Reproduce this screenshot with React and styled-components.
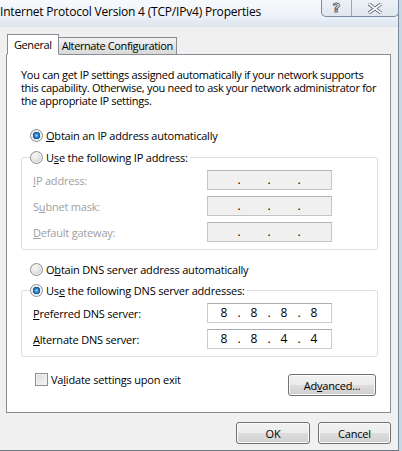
import styled, { createGlobalStyle } from "styled-components";

const GlobalStyle = createGlobalStyle`
  html, body {
    margin: 0;
    padding: 0;
  }
  body {
    width: 402px;
    height: 451px;
    overflow: hidden;
    background: #c9d6e4;
    font-family: "Open Sans", "Noto Sans", sans-serif;
    font-size: 11px;
    letter-spacing: -0.2px;
    color: #000;
  }
`;

function Radio({ checked }) {
  return <RadioCircle $checked={checked} />;
}

function IpField({ disabled, value }) {
  const parts = value || ["", "", "", ""];
  return (
    <Field $disabled={disabled}>
      {parts.map((p, i) => (
        <Octet key={i}>
          <Digit>{p}</Digit>
          {i < 3 && <Dot>.</Dot>}
        </Octet>
      ))}
    </Field>
  );
}

function App() {
  return (
    <>
      <GlobalStyle />
      <Window>
        <TitleBar>
          <Title>Internet Protocol Version 4 (TCP/IPv4) Properties</Title>
          <CaptionButtons>
            <CaptionButton $w={29}>
              <HelpGlyph>?</HelpGlyph>
            </CaptionButton>
            <CaptionButton $w={46} $last>
              <svg width="14" height="11" viewBox="0 0 14 11">
                <path
                  d="M1 1 L13 10 M13 1 L1 10"
                  stroke="#5a6676"
                  strokeWidth="3.4"
                  strokeLinecap="square"
                />
                <path
                  d="M1 1 L13 10 M13 1 L1 10"
                  stroke="#fff"
                  strokeWidth="1.6"
                  strokeLinecap="square"
                />
              </svg>
            </CaptionButton>
          </CaptionButtons>
        </TitleBar>

        <Client>
          <Tabs>
            <Tab $active>General</Tab>
            <Tab>Alternate Configuration</Tab>
          </Tabs>

          <Panel>
            <Intro>
              You can get IP settings assigned automatically if your network supports
              this capability. Otherwise, you need to ask your network administrator
              for the appropriate IP settings.
            </Intro>

            <Option $top={20}>
              <Radio checked />
              <span>
                <Key>O</Key>btain an IP address automatically
              </span>
            </Option>

            <Group $top={5}>
              <Legend>
                <Radio />
                <span>
                  U<Key>s</Key>e the following IP address:
                </span>
              </Legend>
              <Row $disabled>
                <span>
                  <Key>I</Key>P address:
                </span>
                <IpField disabled />
              </Row>
              <Row $disabled>
                <span>
                  S<Key>u</Key>bnet mask:
                </span>
                <IpField disabled />
              </Row>
              <Row $disabled>
                <span>
                  <Key>D</Key>efault gateway:
                </span>
                <IpField disabled />
              </Row>
            </Group>

            <Option $top={11}>
              <Radio />
              <span>
                O<Key>b</Key>tain DNS server address automatically
              </span>
            </Option>

            <Group $top={4}>
              <Legend>
                <Radio checked />
                <span>
                  Us<Key>e</Key> the following DNS server addresses:
                </span>
              </Legend>
              <Row>
                <span>
                  <Key>P</Key>referred DNS server:
                </span>
                <IpField value={["8", "8", "8", "8"]} />
              </Row>
              <Row>
                <span>
                  <Key>A</Key>lternate DNS server:
                </span>
                <IpField value={["8", "8", "4", "4"]} />
              </Row>
            </Group>

            <Footer>
              <CheckLabel>
                <Checkbox />
                <span>
                  Va<Key>l</Key>idate settings upon exit
                </span>
              </CheckLabel>
              <Button $w={88}>
                Ad<Key>v</Key>anced...
              </Button>
            </Footer>
          </Panel>

          <Actions>
            <Button $w={74}>OK</Button>
            <Button $w={73}>Cancel</Button>
          </Actions>
        </Client>
      </Window>
    </>
  );
}

const Window = styled.div`
  width: 398px;
  height: 450px;
  display: flex;
  flex-direction: column;
  border-right: 1px solid #7d8a99;
  border-bottom: 1px solid #6b7685;
  background: #f0f0f0;
`;

const TitleBar = styled.div`
  height: 27px;
  display: flex;
  justify-content: space-between;
  align-items: flex-start;
  background: linear-gradient(
    to bottom,
    #f7f9fc 0%,
    #eef3f9 60%,
    #e3eaf3 80%,
    #dde5ef 100%
  );
`;

const Title = styled.div`
  font-size: 12px;
  letter-spacing: -0.2px;
  line-height: 16px;
  padding-top: 4px;
  white-space: nowrap;
`;

const CaptionButtons = styled.div`
  display: flex;
  margin-right: -1px;
  border: 1px solid #7a8aa0;
  border-top: none;
  border-radius: 0 0 5px 5px;
  overflow: hidden;
  background: linear-gradient(to bottom, #eef2f7, #dfe6ef);
`;

const CaptionButton = styled.div`
  width: ${(p) => p.$w}px;
  height: 16px;
  display: flex;
  align-items: center;
  justify-content: center;
  border-right: ${(p) => (p.$last ? "none" : "1px solid #9aa8ba")};
`;

const HelpGlyph = styled.span`
  font-family: "DejaVu Sans", sans-serif;
  font-weight: bold;
  font-size: 13px;
  line-height: 14px;
  color: #fff;
  -webkit-text-stroke: 1px #5a6676;
`;

const Client = styled.div`
  flex: 1;
  display: flex;
  flex-direction: column;
  padding: 7px 7px 0 6px;
`;

const Tabs = styled.div`
  display: flex;
  align-items: flex-end;
  padding-left: 1px;
  height: 21px;
  margin-bottom: -1px;
  position: relative;
  z-index: 1;
`;

const Tab = styled.div`
  height: ${(p) => (p.$active ? "21px" : "18px")};
  padding: 0 ${(p) => (p.$active ? "6px" : "3px")};
  margin-right: ${(p) => (p.$active ? "-1px" : "0")};
  display: flex;
  align-items: center;
  box-sizing: border-box;
  border: 1px solid #898c95;
  border-bottom: ${(p) => (p.$active ? "1px solid #fff" : "1px solid #898c95")};
  background: ${(p) =>
    p.$active ? "#fff" : "linear-gradient(to bottom, #f2f2f2, #e5e5e5 50%, #d9d9d9)"};
  position: relative;
  z-index: ${(p) => (p.$active ? 2 : 1)};
  letter-spacing: -0.4px;
  line-height: 14px;
`;

const Panel = styled.div`
  width: 385px;
  height: 359px;
  box-sizing: border-box;
  border: 1px solid #898c95;
  background: #fff;
  padding: 13px 12px 0 14px;
  display: flex;
  flex-direction: column;
`;

const Intro = styled.p`
  margin: 0;
  line-height: 13px;
  width: 360px;
  letter-spacing: -0.3px;
`;

const Option = styled.div`
  display: flex;
  align-items: center;
  gap: 3px;
  margin-top: ${(p) => p.$top}px;
  margin-left: 9px;
  height: 17px;
  line-height: 17px;
`;

const RadioCircle = styled.span`
  width: 13px;
  height: 13px;
  box-sizing: border-box;
  border-radius: 50%;
  border: 1px solid #8e8f8f;
  flex: none;
  background: ${(p) =>
    p.$checked
      ? "radial-gradient(circle at 50% 50%, #9fd3ff 0, #2e7fd0 2px, #16508e 3.5px, #e4e4e4 4px, #f4f4f4 6px)"
      : "radial-gradient(circle at 40% 40%, #fafafa 0, #e4e4e4 4px, #d4d4d4 6px)"};
  box-shadow: inset 0 0 0 1px #f4f4f4;
`;

const Group = styled.fieldset`
  margin: ${(p) => p.$top}px 0 0 0;
  width: 357px;
  box-sizing: border-box;
  border: 1px solid #d5dfe5;
  border-radius: 3px;
  padding: 4px 0 7px 11px;
  display: flex;
  flex-direction: column;
  gap: 6px;
`;

const Legend = styled.legend`
  display: flex;
  align-items: center;
  gap: 3px;
  padding: 0 2px 0 0;
  margin-left: -3px;
  line-height: 17px;
`;

const Row = styled.div`
  display: flex;
  align-items: center;
  justify-content: space-between;
  width: 299px;
  height: 20px;
  color: ${(p) => (p.$disabled ? "#a0a0a0" : "#000")};
`;

const Field = styled.div`
  width: 125px;
  height: 20px;
  box-sizing: border-box;
  border: 1px solid ${(p) => (p.$disabled ? "#c5c5c5" : "#c9ccd2")};
  border-top-color: ${(p) => (p.$disabled ? "#b4b4b4" : "#abadb3")};
  background: ${(p) => (p.$disabled ? "#f0f0f0" : "#fff")};
  display: flex;
  padding-left: 6px;
  color: #000;
  font-size: 12px;
  letter-spacing: 0;
  line-height: 18px;
`;

const Octet = styled.span`
  display: flex;
`;

const Digit = styled.span`
  width: 20px;
  text-align: center;
`;

const Dot = styled.span`
  width: 10px;
  text-align: center;
`;

const Footer = styled.div`
  display: flex;
  justify-content: space-between;
  align-items: flex-start;
  margin-top: 15px;
  width: 355px;
`;

const CheckLabel = styled.div`
  display: flex;
  align-items: center;
  gap: 3px;
  margin-left: 14px;
  height: 15px;
`;

const Checkbox = styled.span`
  width: 13px;
  height: 13px;
  box-sizing: border-box;
  border: 1px solid #8e8f8f;
  background: linear-gradient(135deg, #dcdcdc, #f6f6f6);
  box-shadow: inset 0 0 0 1px #f2f2f2;
  flex: none;
`;

const Button = styled.div`
  width: ${(p) => p.$w}px;
  height: 22px;
  box-sizing: border-box;
  border: 1px solid #707070;
  border-radius: 3px;
  display: flex;
  align-items: center;
  justify-content: center;
  background: linear-gradient(
    to bottom,
    #f2f2f2 0%,
    #ebebeb 50%,
    #dddddd 51%,
    #cfcfcf 100%
  );
  box-shadow: inset 0 0 0 1px #fcfcfc;
  margin-top: 2px;
`;

const Actions = styled.div`
  display: flex;
  justify-content: flex-end;
  gap: 8px;
  padding-top: 7px;
  width: 385px;
`;

const Key = styled.span`
  text-decoration: underline;
`;

export default App;
